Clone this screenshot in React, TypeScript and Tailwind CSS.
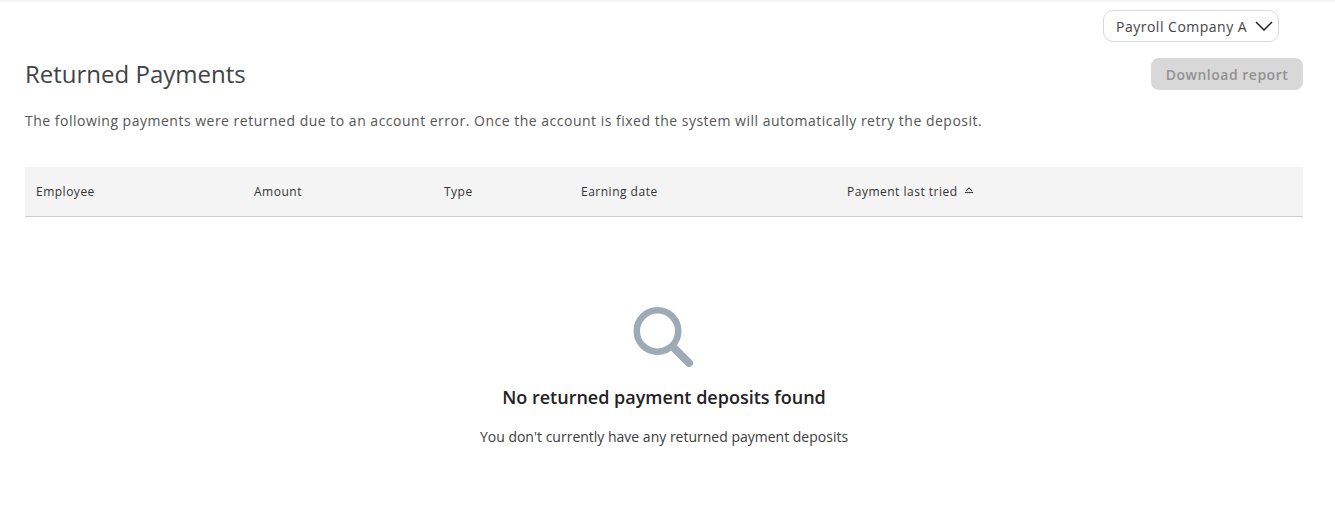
const columns = [
  { label: "Employee", width: "w-[218px]" },
  { label: "Amount", width: "w-[190px]" },
  { label: "Type", width: "w-[137px]" },
  { label: "Earning date", width: "w-[266px]" },
];

const App = () => {
  return (
    <div className="min-h-[523px] bg-white font-['Open_Sans',sans-serif] text-[#3c3c3c]">
      <div className="h-[3px] bg-gradient-to-b from-[#f0f0f0] to-white" />
      <div className="px-[25px] pr-[32px]">
        <div className="flex justify-end pt-[7px] pr-[24px]">
          <button className="flex h-[32px] w-[176px] items-center justify-between rounded-[10px] border border-[#d8d8d8] pl-[12px] pr-[5px] text-[14px] tracking-[0.5px] text-[#444]">
            Payroll Company A
            <svg width="18" height="10" viewBox="0 0 18 10" fill="none" stroke="#222" strokeWidth="1.5">
              <path d="M1 1l8 8 8-8" />
            </svg>
          </button>
        </div>

        <div className="mt-[16px] flex items-center justify-between">
          <h1 className="text-[24px] leading-[32px] font-normal text-[#3f4347]">Returned Payments</h1>
          <button className="h-[32px] w-[152px] rounded-[8px] bg-[#d8d8d8] text-[14px] font-semibold tracking-[0.5px] text-[#929292]">
            Download report
          </button>
        </div>

        <p className="mt-[21px] text-[14px] leading-[20px] tracking-[0.5px] text-[#555]">
          The following payments were returned due to an account error. Once the account is fixed the system will automatically retry the deposit.
        </p>

        <div className="mt-[36px] flex h-[50px] items-center border-b border-[#cfcfcf] bg-[#f4f4f4] pl-[11px] text-[12px] font-normal tracking-[0.5px] text-[#333]">
          {columns.map((col) => (
            <div key={col.label} className={col.width}>{col.label}</div>
          ))}
          <div className="flex items-center gap-[6px]">
            Payment last tried
            <svg width="10" height="7" viewBox="0 0 10 7" fill="none" stroke="#444" className="mb-[3px]">
              <path d="M2 3.8L5 1L8 3.8" strokeWidth="1.1" />
              <path d="M1 5.5h8" strokeWidth="1.2" />
            </svg>
          </div>
        </div>

        <div className="flex flex-col items-center pt-[88px]">
          <svg width="64" height="64" viewBox="0 0 64 64" fill="none" stroke="#9eaab5">
            <circle cx="25.5" cy="26" r="20.75" strokeWidth="6.5" />
            <path d="M42 43l15 15" strokeWidth="8" strokeLinecap="round" />
          </svg>
          <h2 className="mt-[15px] text-[18px] leading-[26px] font-semibold text-[#222]">No returned payment deposits found</h2>
          <p className="mt-[17px] text-[14px] leading-[20px] text-[#3c3c3c]">You don't currently have any returned payment deposits</p>
        </div>
      </div>
    </div>
  );
};

export default App;
